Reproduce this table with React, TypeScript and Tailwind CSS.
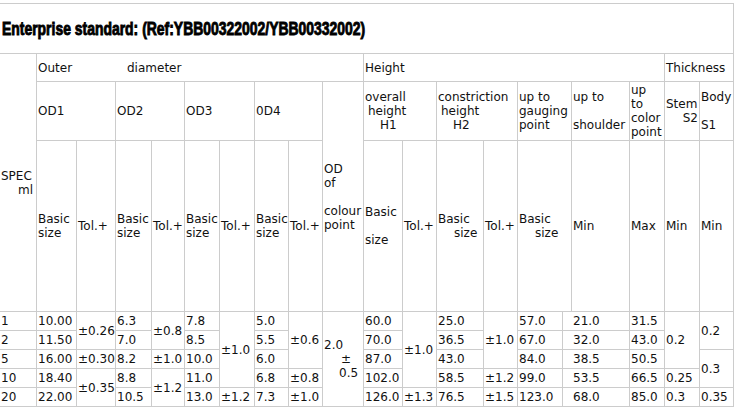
import type { ReactNode } from "react";
import clsx from "clsx";
import { twMerge } from "tailwind-merge";

function Cell({ className, children }: { className?: string; children?: ReactNode }) {
  return (
    <div
      className={twMerge(
        clsx("flex flex-col justify-center whitespace-nowrap bg-white pl-px", className),
      )}
    >
      {children}
    </div>
  );
}

function Line({ className, children }: { className?: string; children?: ReactNode }) {
  return <span className={clsx("block", className)}>{children}</span>;
}

const Gap = () => <span className="block h-[14px]" />;

// data area, rows 5..9 of the grid
const data: [string, string][] = [
  ["col-start-1 row-start-5", "1"],
  ["col-start-1 row-start-6", "2"],
  ["col-start-1 row-start-7", "5"],
  ["col-start-1 row-start-8", "10"],
  ["col-start-1 row-start-9", "20"],

  ["col-start-2 row-start-5", "10.00"],
  ["col-start-2 row-start-6", "11.50"],
  ["col-start-2 row-start-7", "16.00"],
  ["col-start-2 row-start-8", "18.40"],
  ["col-start-2 row-start-9", "22.00"],
  ["col-start-3 row-start-5 row-span-2", "±0.26"],
  ["col-start-3 row-start-7", "±0.30"],
  ["col-start-3 row-start-8 row-span-2", "±0.35"],

  ["col-start-4 row-start-5", "6.3"],
  ["col-start-4 row-start-6", "7.0"],
  ["col-start-4 row-start-7", "8.2"],
  ["col-start-4 row-start-8", "8.8"],
  ["col-start-4 row-start-9", "10.5"],
  ["col-start-5 row-start-5 row-span-2", "±0.8"],
  ["col-start-5 row-start-7", "±1.0"],
  ["col-start-5 row-start-8 row-span-2", "±1.2"],

  ["col-start-6 row-start-5", "7.8"],
  ["col-start-6 row-start-6", "8.5"],
  ["col-start-6 row-start-7", "10.0"],
  ["col-start-6 row-start-8", "11.0"],
  ["col-start-6 row-start-9", "13.0"],
  ["col-start-7 row-start-5 row-span-4", "±1.0"],
  ["col-start-7 row-start-9", "±1.2"],

  ["col-start-8 row-start-5", "5.0"],
  ["col-start-8 row-start-6", "5.5"],
  ["col-start-8 row-start-7", "6.0"],
  ["col-start-8 row-start-8", "6.8"],
  ["col-start-8 row-start-9", "7.3"],
  ["col-start-9 row-start-5 row-span-3", "±0.6"],
  ["col-start-9 row-start-8", "±0.8"],
  ["col-start-9 row-start-9", "±1.0"],

  ["col-start-11 row-start-5", "60.0"],
  ["col-start-11 row-start-6", "70.0"],
  ["col-start-11 row-start-7", "87.0"],
  ["col-start-11 row-start-8", "102.0"],
  ["col-start-11 row-start-9", "126.0"],
  ["col-start-12 row-start-5 row-span-4", "±1.0"],
  ["col-start-12 row-start-9", "±1.3"],

  ["col-start-13 row-start-5", "25.0"],
  ["col-start-13 row-start-6", "36.5"],
  ["col-start-13 row-start-7", "43.0"],
  ["col-start-13 row-start-8", "58.5"],
  ["col-start-13 row-start-9", "76.5"],
  ["col-start-14 row-start-5 row-span-3", "±1.0"],
  ["col-start-14 row-start-8", "±1.2"],
  ["col-start-14 row-start-9", "±1.5"],

  ["col-start-15 row-start-5", "57.0"],
  ["col-start-15 row-start-6", "67.0"],
  ["col-start-15 row-start-7", "84.0"],
  ["col-start-15 row-start-8", "99.0"],
  ["col-start-15 row-start-9", "123.0"],

  ["col-start-16 col-span-2 row-start-5 pl-[10px]", "21.0"],
  ["col-start-16 col-span-2 row-start-6 pl-[10px]", "32.0"],
  ["col-start-16 col-span-2 row-start-7 pl-[10px]", "38.5"],
  ["col-start-16 col-span-2 row-start-8 pl-[10px]", "53.5"],
  ["col-start-16 col-span-2 row-start-9 pl-[10px]", "68.0"],

  ["col-start-18 row-start-5", "31.5"],
  ["col-start-18 row-start-6", "43.0"],
  ["col-start-18 row-start-7", "50.5"],
  ["col-start-18 row-start-8", "66.5"],
  ["col-start-18 row-start-9", "85.0"],

  ["col-start-19 row-start-5 row-span-3", "0.2"],
  ["col-start-19 row-start-8", "0.25"],
  ["col-start-19 row-start-9", "0.3"],

  ["col-start-20 row-start-5 row-span-2", "0.2"],
  ["col-start-20 row-start-7 row-span-2", "0.3"],
  ["col-start-20 row-start-9", "0.35"],
];

export default function App() {
  return (
    <div className="h-[410px] overflow-hidden bg-white pt-[3px] font-['DejaVu_Sans',sans-serif] text-[12px] leading-[14px] text-[#111]">
      <div className="-ml-px inline-grid grid-cols-[36px_39px_38px_35px_32px_34px_34px_33px_33px_40px_38px_33px_46px_33px_44px_8px_57px_34px_34px_33px] grid-rows-[49px_27px_58px_170px_18px_18px_18px_18px_18px] gap-px bg-[#cccccc] p-px">
        <Cell className="col-span-20 col-start-1 row-start-1 pl-[2px] pt-px">
          <span className="inline-block origin-left scale-x-[0.774] font-['Liberation_Sans',Arial,sans-serif] text-[18px] font-bold leading-[20px] text-black [-webkit-text-stroke:0.9px_black]">
            Enterprise standard: (Ref:YBB00322002/YBB00332002)
          </span>
        </Cell>

        {/* header row: groups */}
        <Cell className="col-start-1 row-span-3 row-start-2">
          <Line>SPEC</Line>
          <Line className="ml-[17px]">ml</Line>
        </Cell>
        <Cell className="col-span-9 col-start-2 row-start-2">
          <Line>
            <span className="inline-block w-[89px]">Outer</span>diameter
          </Line>
        </Cell>
        <Cell className="col-span-8 col-start-11 row-start-2">Height</Cell>
        <Cell className="col-span-2 col-start-19 row-start-2">Thickness</Cell>

        {/* header row: dimensions */}
        <Cell className="col-span-2 col-start-2 row-start-3">OD1</Cell>
        <Cell className="col-span-2 col-start-4 row-start-3">OD2</Cell>
        <Cell className="col-span-2 col-start-6 row-start-3">OD3</Cell>
        <Cell className="col-span-2 col-start-8 row-start-3">0D4</Cell>
        <Cell className="col-start-10 row-span-2 row-start-3">
          <Line>OD</Line>
          <Line>of</Line>
          <Gap />
          <Line>colour</Line>
          <Line>point</Line>
        </Cell>
        <Cell className="col-span-2 col-start-11 row-start-3">
          <Line>overall</Line>
          <Line className="ml-[3px]">height</Line>
          <Line className="ml-[15px]">H1</Line>
        </Cell>
        <Cell className="col-span-2 col-start-13 row-start-3">
          <Line>constriction</Line>
          <Line className="ml-[3px]">height</Line>
          <Line className="ml-[15px]">H2</Line>
        </Cell>
        <Cell className="col-span-2 col-start-15 row-start-3">
          <Line>up to</Line>
          <Line>gauging</Line>
          <Line>point</Line>
        </Cell>
        <Cell className="col-start-17 row-start-3">
          <Line>up to</Line>
          <Gap />
          <Line>shoulder</Line>
        </Cell>
        <Cell className="col-start-18 row-start-3">
          <Line>up</Line>
          <Line>to</Line>
          <Line>color</Line>
          <Line>point</Line>
        </Cell>
        <Cell className="col-start-19 row-start-3 pr-px">
          <Line>Stem</Line>
          <Line className="text-right">S2</Line>
        </Cell>
        <Cell className="col-start-20 row-start-3">
          <Line>Body</Line>
          <Gap />
          <Line>S1</Line>
        </Cell>

        {/* header row: basic / tolerance */}
        <Cell className="col-start-2 row-start-4">
          <Line>Basic</Line>
          <Line>size</Line>
        </Cell>
        <Cell className="col-start-3 row-start-4">Tol.+</Cell>
        <Cell className="col-start-4 row-start-4">
          <Line>Basic</Line>
          <Line>size</Line>
        </Cell>
        <Cell className="col-start-5 row-start-4">Tol.+</Cell>
        <Cell className="col-start-6 row-start-4">
          <Line>Basic</Line>
          <Line>size</Line>
        </Cell>
        <Cell className="col-start-7 row-start-4">Tol.+</Cell>
        <Cell className="col-start-8 row-start-4">
          <Line>Basic</Line>
          <Line>size</Line>
        </Cell>
        <Cell className="col-start-9 row-start-4">Tol.+</Cell>
        <Cell className="col-start-11 row-start-4">
          <Line>Basic</Line>
          <Gap />
          <Line>size</Line>
        </Cell>
        <Cell className="col-start-12 row-start-4">Tol.+</Cell>
        <Cell className="col-start-13 row-start-4">
          <Line>Basic</Line>
          <Line className="ml-[16px]">size</Line>
        </Cell>
        <Cell className="col-start-14 row-start-4">Tol.+</Cell>
        <Cell className="col-span-2 col-start-15 row-start-4">
          <Line>Basic</Line>
          <Line className="ml-[16px]">size</Line>
        </Cell>
        <Cell className="col-start-17 row-start-4">Min</Cell>
        <Cell className="col-start-18 row-start-4">Max</Cell>
        <Cell className="col-start-19 row-start-4">Min</Cell>
        <Cell className="col-start-20 row-start-4">Min</Cell>

        {/* values */}
        {data.map(([c, t], i) => (
          <Cell key={i} className={c}>
            {t}
          </Cell>
        ))}
        <Cell className="col-start-10 row-span-5 row-start-5">
          <Line>2.0</Line>
          <Line className="ml-[17px]">±</Line>
          <Line className="ml-[15px]">0.5</Line>
        </Cell>
      </div>
    </div>
  );
}
